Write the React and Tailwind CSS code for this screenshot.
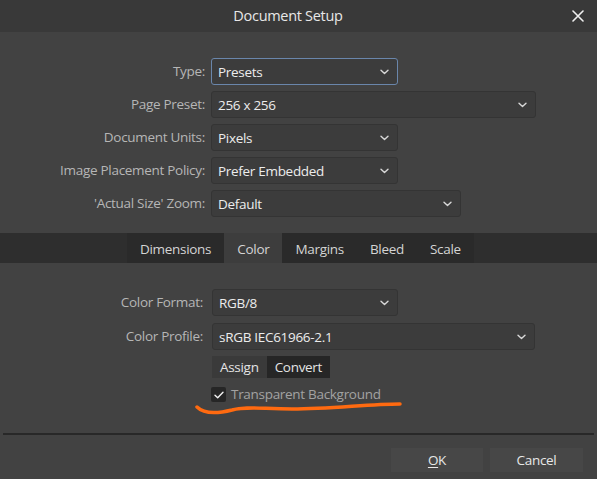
import React from 'react';

const Chevron = () => (
    <svg width="9" height="6" viewBox="0 0 9 6" className="shrink-0">
        <path d="M1 1.2 L4.5 4.6 L8 1.2" fill="none" stroke="#d8d8d8" strokeWidth="1.4" strokeLinecap="round" strokeLinejoin="round" />
    </svg>
);

function Select({ value, width, focused }) {
    return (
        <div
            className={`h-[27px] flex items-center justify-between pl-[6px] pr-[8px] pt-[1px] rounded-[3px] bg-[#3c3c3c] border ${focused ? 'border-[#6a86ab]' : 'border-[#343434]'} text-[#ececec]`}
            style={{ width }}
        >
            <span>{value}</span>
            <Chevron />
        </div>
    );
}

function Row({ label, value, width, focused, labelWidth = 205, gap = 6 }) {
    return (
        <div className="flex items-center" style={{ gap }}>
            <div className="text-right text-[#b6b6b6]" style={{ width: labelWidth }}>
                {label}
            </div>
            <Select value={value} width={width} focused={focused} />
        </div>
    );
}

const tabs = ['Dimensions', 'Color', 'Margins', 'Bleed', 'Scale'];

export default function App() {
    return (
        <div className="relative w-[597px] h-[479px] bg-[#424242] flex flex-col text-[13.5px] tracking-[-0.3px] overflow-hidden" style={{ fontFamily: '"Open Sans", "Noto Sans", sans-serif' }}>
            {/* title bar */}
            <div className="relative h-[32px] shrink-0 bg-[#393939] flex items-center justify-center pr-[21px]">
                <span className="text-[14.5px] text-[#e8e8e8]">Document Setup</span>
                <svg width="12" height="12" viewBox="0 0 12 12" className="absolute right-[13px] top-[10px]">
                    <path d="M1 1 L11 11 M11 1 L1 11" stroke="#f0f0f0" strokeWidth="1.6" strokeLinecap="round" />
                </svg>
            </div>

            {/* general settings */}
            <div className="flex flex-col gap-[6px] pt-[26px]">
                <Row label="Type:" value="Presets" width={187} focused />
                <Row label="Page Preset:" value="256 x 256" width={325} />
                <Row label="Document Units:" value="Pixels" width={187} />
                <Row label="Image Placement Policy:" value="Prefer Embedded" width={187} />
                <Row label="'Actual Size' Zoom:" value="Default" width={250} />
            </div>

            {/* tabs */}
            <div className="mt-[16px] h-[30px] shrink-0 bg-[#2e2e2e] flex pl-[127px]">
                <div className="flex bg-[#2a2a2a]">
                    {tabs.map((t) => (
                        <div
                            key={t}
                            className={`h-full flex items-center px-[13px] pt-[2px] text-[#d4d4d4] ${t === 'Color' ? 'bg-[#3d3d3d]' : ''}`}
                        >
                            {t}
                        </div>
                    ))}
                </div>
            </div>

            {/* color settings */}
            <div className="flex flex-col pt-[26px]">
                <div className="flex flex-col gap-[7px]">
                    <Row label="Color Format:" value="RGB/8" width={186} labelWidth={203} gap={9} />
                    <Row label="Color Profile:" value="sRGB IEC61966-2.1" width={323} labelWidth={203} gap={9} />
                </div>
                <div className="flex mt-[6px] ml-[212px] h-[22px]">
                    <div className="px-[8px] flex items-center bg-[#3a3a3a] text-[#e4e4e4]">Assign</div>
                    <div className="px-[8px] flex items-center bg-[#262626] text-[#e4e4e4]">Convert</div>
                </div>
                <div className="flex items-center mt-[9px] ml-[211px] gap-[5px] h-[15px]">
                    <div className="w-[15px] h-[15px] rounded-[2px] bg-[#262626] flex items-center justify-center">
                        <svg width="10" height="8" viewBox="0 0 10 8">
                            <path d="M1 4.2 L3.7 6.8 L9 1.2" fill="none" stroke="#f2f2f2" strokeWidth="1.4" strokeLinecap="round" strokeLinejoin="round" />
                        </svg>
                    </div>
                    <span className="text-[#a2a2a2]">Transparent Background</span>
                </div>
            </div>

            {/* separator + buttons */}
            <div className="mt-[31px] mx-[3px] h-[2px] bg-[#282828]" />
            <div className="flex justify-end gap-[7px] pr-[14px] mt-[13px]">
                <div className="w-[92px] h-[24px] flex items-center justify-center bg-[#474747] text-[#e8e8e8]">
                    <span><span className="underline underline-offset-2">O</span>K</span>
                </div>
                <div className="w-[93px] h-[24px] flex items-center justify-center bg-[#474747] text-[#e8e8e8]">
                    Cancel
                </div>
            </div>

            {/* hand-drawn orange underline annotation */}
            <svg className="absolute left-0 top-0 pointer-events-none" width="597" height="479">
                <path
                    d="M197 407 C 204 414, 216 414, 232 410 C 246 406, 262 409, 292 409 C 332 409, 368 404, 400 404"
                    fill="none"
                    stroke="#ff6a10"
                    strokeWidth="3.5"
                    strokeLinecap="round"
                />
            </svg>
        </div>
    );
}
